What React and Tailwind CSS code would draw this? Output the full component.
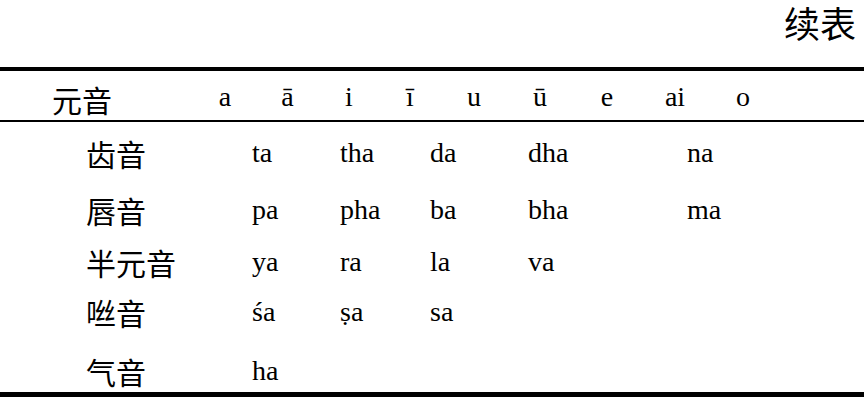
const zh = { fontFamily: '"Noto Sans CJK SC", "Noto Sans CJK JP", sans-serif' };
const latin = { fontFamily: '"Liberation Serif", "DejaVu Serif", serif' };

const vowels = ['a', 'ā', 'i', 'ī', 'u', 'ū', 'e', 'ai', 'o'];

// consonant rows: label + cells aligned to the columns of the scanned table
const rows = [
  { label: '齿音', cells: ['ta', 'tha', 'da', 'dha', '', 'na'], h: 'h-[62px]' },
  { label: '唇音', cells: ['pa', 'pha', 'ba', 'bha', '', 'ma'], h: 'h-[51px]' },
  { label: '半元音', cells: ['ya', 'ra', 'la', 'va', '', ''], h: 'h-[54px]' },
  { label: '咝音', cells: ['śa', 'ṣa', 'sa', '', '', ''], h: 'h-[45px]' },
  { label: '气音', cells: ['ha', '', '', '', '', ''], h: 'h-[58px] pt-[16px]' },
];

export default function App() {
  return (
    <div className="w-[864px] h-[400px] bg-white text-black overflow-hidden">
      {/* caption */}
      <div className="h-[67px] flex items-start justify-end pr-[8px]">
        <span style={zh} className="text-[36px] leading-[44px]">续表</span>
      </div>

      <div className="border-t-4 border-black" />

      {/* header row */}
      <div className="h-[51px] border-b-2 border-black grid grid-cols-[194px_62px_63px_60px_62px_66px_66px_68px_68px_68px] items-center">
        <span style={zh} className="pl-[52px] pt-[6px] text-[30px] leading-none">元音</span>
        {vowels.map((v) => (
          <span key={v} style={latin} className="text-center text-[28px] leading-none pt-[2px]">
            {v}
          </span>
        ))}
      </div>

      {/* body */}
      {rows.map((r) => (
        <div
          key={r.label}
          className={`${r.h} grid grid-cols-[252px_88px_90px_98px_80px_79px_1fr] items-center`}
        >
          <span style={zh} className="pl-[86px] text-[30px] leading-none">{r.label}</span>
          {r.cells.map((c, i) => (
            <span key={i} style={latin} className="text-[28px] leading-none">
              {c}
            </span>
          ))}
        </div>
      ))}

      <div className="border-t-[5px] border-black" />
    </div>
  );
}
